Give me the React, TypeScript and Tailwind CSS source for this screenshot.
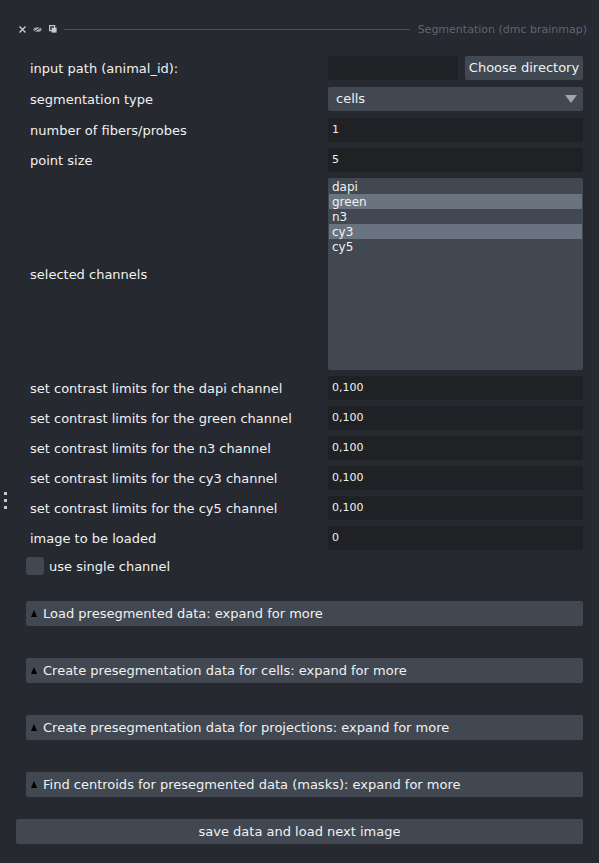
import React from "react";

const inputCls =
  "h-[24px] w-full bg-[#202125] rounded-[2px] flex items-center pl-[4px] text-[11px] text-[#eef0f4]";

function Row({ label, children, h = "h-[24px]" }: { label: string; children: React.ReactNode; h?: string }) {
  return (
    <div className={`flex items-center ${h}`}>
      <div className="flex-1 text-[13px] leading-none">{label}</div>
      <div className="w-[255px] h-full">{children}</div>
    </div>
  );
}

function Collapsible({ text }: { text: string }) {
  return (
    <div className="h-[25px] bg-[#414851] rounded-[2px] flex items-center pl-[5px]">
      <svg width="6" height="7" viewBox="0 0 6 7" className="mr-[6px]">
        <polygon points="3,0 6,7 0,7" fill="#000" />
      </svg>
      <span className="text-[13px] leading-none">{text}</span>
    </div>
  );
}

export default function App() {
  const channels = ["dapi", "green", "n3", "cy3", "cy5"];
  const selected = ["green", "cy3"];
  return (
    <div className="w-[599px] h-[863px] bg-[#262930] text-[#f0f1f2] font-['DejaVu_Sans',sans-serif] relative overflow-hidden">
      {/* title bar */}
      <div className="flex items-center h-[18px] mt-[20px] pl-[19px] pr-[12px]">
        <svg width="7" height="7" viewBox="0 0 7 7">
          <path d="M0.5 0.5 L6.5 6.5 M6.5 0.5 L0.5 6.5" stroke="#c8cacc" strokeWidth="1.4" />
        </svg>
        <svg width="9" height="7" viewBox="0 0 9 7" className="ml-[7px]">
          <ellipse cx="4.5" cy="3.5" rx="4" ry="2.3" fill="#9a9da2" />
          <circle cx="4.5" cy="3.5" r="1.3" fill="#d0d2d4" />
          <path d="M1 6 L8 1" stroke="#262930" strokeWidth="1" />
        </svg>
        <svg width="8" height="8" viewBox="0 0 8 8" className="ml-[7px]">
          <rect x="0.6" y="0.6" width="5" height="5" fill="none" stroke="#c8cacc" strokeWidth="1.2" />
          <rect x="2.6" y="2.6" width="5" height="5" fill="#c8cacc" />
        </svg>
        <div className="flex-1 h-px bg-[#4b5058] ml-[7px] mr-[8px]" />
        <div className="text-[11px] text-[#5f6670] leading-none whitespace-nowrap">Segmentation (dmc brainmap)</div>
      </div>

      {/* form */}
      <div className="mt-[18px] pl-[30px] pr-[16px] flex flex-col">
        <Row label="input path (animal_id):">
          <div className="flex h-full gap-[7px]">
            <div className="w-[130px] h-full bg-[#202125] rounded-[2px]" />
            <div className="w-[118px] h-full bg-[#414851] rounded-[2px] flex items-center justify-center text-[13px]">
              Choose directory
            </div>
          </div>
        </Row>
        <div className="mt-[7px]">
          <Row label="segmentation type">
            <div className="h-full bg-[#414851] rounded-[2px] flex items-center pl-[8px] pr-[6px] text-[13px]">
              <span className="flex-1">cells</span>
              <svg width="12" height="8" viewBox="0 0 12 8">
                <polygon points="0,0 12,0 6,8" fill="#a2a6ac" />
              </svg>
            </div>
          </Row>
        </div>
        <div className="mt-[7px]">
          <Row label="number of fibers/probes">
            <div className={inputCls}>1</div>
          </Row>
        </div>
        <div className="mt-[6px]">
          <Row label="point size">
            <div className={inputCls}>5</div>
          </Row>
        </div>
        <div className="mt-[6px]">
          <Row label="selected channels" h="h-[192px]">
            <div className="h-full bg-[#414851] rounded-[2px] pt-[1px] px-[1px]">
              {channels.map((c) => (
                <div
                  key={c}
                  className={`h-[15px] flex items-center pl-[3px] text-[12px] leading-none ${
                    selected.includes(c) ? "bg-[#6a7380]" : ""
                  }`}
                >
                  {c}
                </div>
              ))}
            </div>
          </Row>
        </div>
        {["dapi", "green", "n3", "cy3", "cy5"].map((c) => (
          <div className="mt-[6px]" key={c}>
            <Row label={`set contrast limits for the ${c} channel`}>
              <div className={inputCls}>0,100</div>
            </Row>
          </div>
        ))}
        <div className="mt-[6px]">
          <Row label="image to be loaded">
            <div className={inputCls}>0</div>
          </Row>
        </div>
      </div>

      {/* checkbox */}
      <div className="mt-[7px] pl-[26px] flex items-center h-[18px]">
        <div className="w-[18px] h-[18px] bg-[#414851] rounded-[3px]" />
        <span className="ml-[5px] text-[13px] leading-none">use single channel</span>
      </div>

      {/* collapsibles */}
      <div className="pl-[26px] pr-[16px] flex flex-col gap-[32px] mt-[26px]">
        <Collapsible text="Load presegmented data: expand for more" />
        <Collapsible text="Create presegmentation data for cells: expand for more" />
        <Collapsible text="Create presegmentation data for projections: expand for more" />
        <Collapsible text="Find centroids for presegmented data (masks): expand for more" />
      </div>

      {/* save */}
      <div className="px-[16px] mt-[22px]">
        <div className="h-[25px] bg-[#414851] rounded-[2px] flex items-center justify-center text-[13px]">
          save data and load next image
        </div>
      </div>

      {/* handle dots */}
      <div className="absolute left-[4px] top-[492px] flex flex-col gap-[4px]">
        <div className="w-[3px] h-[3px] bg-[#c8cacc]" />
        <div className="w-[3px] h-[3px] bg-[#c8cacc]" />
        <div className="w-[3px] h-[3px] bg-[#c8cacc]" />
      </div>
    </div>
  );
}
